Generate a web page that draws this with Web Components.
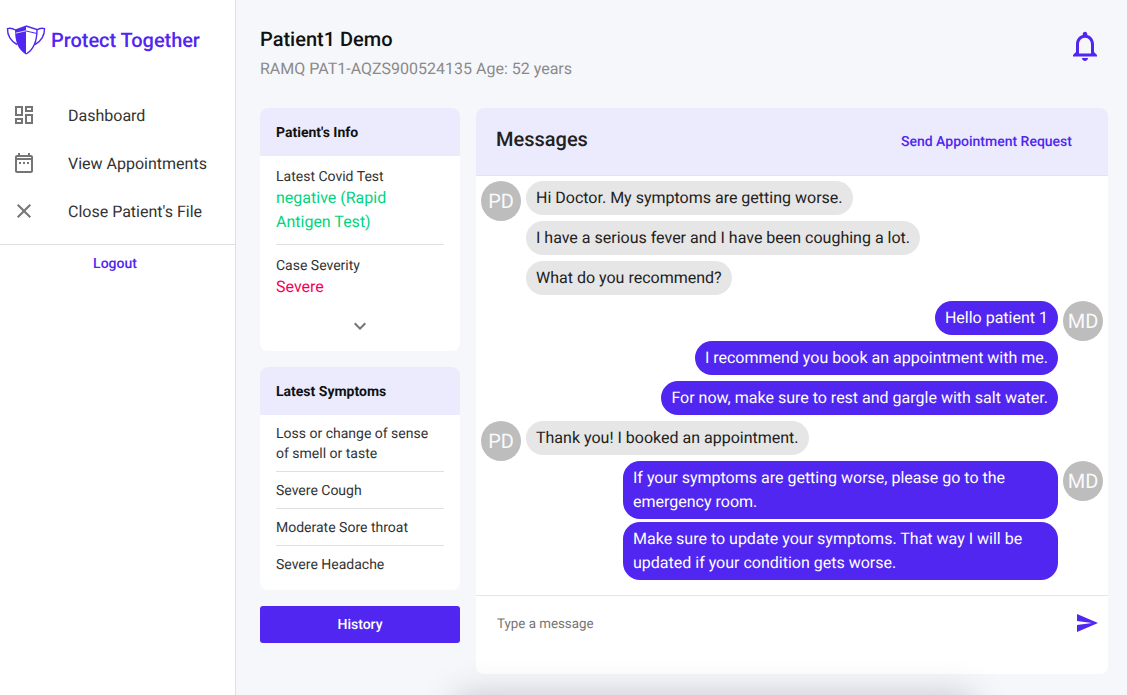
<!DOCTYPE html>
<html>
<head>
<meta charset="utf-8">
<title>Protect Together</title>
<style>
  html, body { margin: 0; height: 100%; overflow: hidden; }
  body { background: #f6f7fb; font-family: Roboto, "Liberation Sans", sans-serif; color: #212121; text-rendering: geometricPrecision; }
</style>
</head>
<body>
<app-shell>
  <side-nav slot="nav"></side-nav>
  <patient-header slot="header"></patient-header>
  <info-card slot="left" heading="Patient's Info" style="height:243px">
    <info-row label="Latest Covid Test" value="negative (Rapid Antigen Test)" tone="#00d47e"></info-row>
    <info-row label="Case Severity" value="Severe" tone="#f50057" last></info-row>
    <svg slot="footer" width="24" height="24" viewBox="0 0 24 24" fill="#757575"><path d="M7.41 8.59 12 13.17l4.59-4.58L18 10l-6 6-6-6z"/></svg>
  </info-card>
  <info-card slot="left" heading="Latest Symptoms" style="height:223px">
    <symptom-row>Loss or change of sense of smell or taste</symptom-row>
    <symptom-row>Severe Cough</symptom-row>
    <symptom-row>Moderate Sore throat</symptom-row>
    <symptom-row last>Severe Headache</symptom-row>
  </info-card>
  <history-button slot="left">History</history-button>
  <message-panel slot="right">
    <chat-line who="PD">Hi Doctor. My symptoms are getting worse.</chat-line>
    <chat-line>I have a serious fever and I have been coughing a lot.</chat-line>
    <chat-line>What do you recommend?</chat-line>
    <chat-line who="MD" mine>Hello patient 1</chat-line>
    <chat-line mine>I recommend you book an appointment with me.</chat-line>
    <chat-line mine>For now, make sure to rest and gargle with salt water.</chat-line>
    <chat-line who="PD">Thank you! I booked an appointment.</chat-line>
    <chat-line who="MD" mine tight>If your symptoms are getting worse, please go to the emergency room.</chat-line>
    <chat-line mine>Make sure to update your symptoms. That way I will be updated if your condition gets worse.</chat-line>
  </message-panel>
</app-shell>

<script>
class AppShell extends HTMLElement {
  constructor() {
    super();
    this.attachShadow({ mode: "open" }).innerHTML = `
    <style>
      :host { display: flex; height: 695px; position: relative; overflow: hidden; }
      .nav { width: 235px; flex-shrink: 0; background: #fff; border-right: 1px solid #e0e0e0; }
      .main { flex: 1; padding: 0 19px 0 24px; min-width: 0; }
      .columns { display: flex; gap: 16px; align-items: flex-start; }
      .left { width: 200px; flex-shrink: 0; display: flex; flex-direction: column; gap: 16px; }
      .right { flex: 1; min-width: 0; }
      .shade {
        position: absolute; left: 470px; width: 490px; top: 708px; height: 20px;
        box-shadow: 0 0 34px 12px rgba(60,64,80,.28);
      }
    </style>
    <div class="nav"><slot name="nav"></slot></div>
    <div class="main">
      <slot name="header"></slot>
      <div class="columns">
        <div class="left"><slot name="left"></slot></div>
        <div class="right"><slot name="right"></slot></div>
      </div>
    </div>
    <div class="shade"></div>`;
  }
}

class SideNav extends HTMLElement {
  constructor() {
    super();
    this.attachShadow({ mode: "open" }).innerHTML = `
    <style>
      :host { display: block; }
      .brand { display: flex; align-items: center; gap: 5px; height: 28px; padding: 26px 0 0 6px; }
      .brand span { font-size: 20px; font-weight: 500; color: #5026f0; white-space: nowrap; letter-spacing: -.05px; }
      ul { list-style: none; margin: 37px 0 0; padding: 0; border-bottom: 1px solid #e0e0e0; height: 153px; }
      li { display: flex; align-items: center; height: 48px; padding-left: 12px; font-size: 16px; color: #333; }
      li svg { width: 24px; height: 24px; fill: #757575; margin-right: 32px; flex-shrink: 0; }
      .logout { display: block; text-align: center; padding-right: 5px; margin-top: 11px; font-size: 14px; font-weight: 500; color: #5026f0; line-height: 16px; }
    </style>
    <div class="brand">
      <svg width="40" height="30" viewBox="0 0 40 30">
        <g fill="none" stroke="#5026f0">
          <path d="M9.500 5C6.500 3.200 3.500 3 1.500 3.700 1.200 10 5 16.500 11 19.500" stroke-width="1.400"/>
          <path d="M30.500 5C33.500 3.200 36.500 3 38.500 3.700 38.800 10 35 16.500 29 19.500" stroke-width="1.400"/>
          <path d="M20 1 31 4.500C31 15 29 24 20 29" stroke-width="1.400"/>
          <path d="M20 6 31 8.500" stroke-width="1"/>
        </g>
        <path d="M20 .5 9 4.500C9 15 11 24 20 29.500z" fill="#5026f0"/>
        <path d="M9.500 8.200 20 5.800" stroke="#fff" stroke-width=".8" fill="none"/>
      </svg>
      <span>Protect Together</span>
    </div>
    <ul>
      <li><svg viewBox="0 0 24 24"><path d="M19 5v2h-4V5h4M9 5v6H5V5h4m10 8v6h-4v-6h4M9 17v2H5v-2h4M21 3h-8v6h8V3zM11 3H3v10h8V3zm10 8h-8v10h8V11zm-10 4H3v6h8v-6z"/></svg>Dashboard</li>
      <li><svg viewBox="0 0 24 24"><path d="M19 4h-1V2h-2v2H8V2H6v2H5c-1.100 0-2 .9-2 2v14c0 1.100.9 2 2 2h14c1.100 0 2-.9 2-2V6c0-1.100-.9-2-2-2zm0 16H5V9h14v11zM5 7V6h14v1H5zm2 4h2v2H7zm4 0h2v2h-2zm4 0h2v2h-2z"/></svg>View Appointments</li>
      <li><svg viewBox="0 0 24 24"><path d="M19 6.410 17.590 5 12 10.590 6.410 5 5 6.410 10.590 12 5 17.590 6.410 19 12 13.410 17.590 19 19 17.590 13.410 12z"/></svg>Close Patient's File</li>
    </ul>
    <a class="logout">Logout</a>`;
  }
}

class PatientHeader extends HTMLElement {
  constructor() {
    super();
    this.attachShadow({ mode: "open" }).innerHTML = `
    <style>
      :host { display: flex; justify-content: space-between; height: 108px; }
      h1 { margin: 27px 0 0; font-size: 20px; line-height: 24px; font-weight: 500; color: #111; }
      p { margin: 8px 0 0; font-size: 16px; line-height: 20px; color: #8a8a8a; }
      svg { margin: 28px 5px 0 0; width: 36px; height: 36px; fill: #5026f0; }
    </style>
    <div>
      <h1>Patient1 Demo</h1>
      <p>RAMQ PAT1-AQZS900524135 Age: 52 years</p>
    </div>
    <svg viewBox="0 0 24 24"><path d="M12 22c1.100 0 2-.9 2-2h-4c0 1.100.9 2 2 2zm6-6v-5c0-3.070-1.630-5.640-4.500-6.320V4c0-.83-.67-1.500-1.500-1.500s-1.500.67-1.500 1.500v.68C7.640 5.360 6 7.920 6 11v5l-2 2v1h16v-1l-2-2zm-2 1H8v-6c0-2.480 1.510-4.500 4-4.500s4 2.020 4 4.500v6z"/></svg>`;
  }
}

class InfoCard extends HTMLElement {
  constructor() {
    super();
    this.attachShadow({ mode: "open" }).innerHTML = `
    <style>
      :host { display: flex; flex-direction: column; background: #fff; border-radius: 8px; overflow: hidden; }
      h2 { margin: 0; height: 47px; line-height: 48px; padding: 1px 16px 0; background: #ebebfd; font-size: 14px; font-weight: 700; color: #111; flex-shrink: 0; }
      .body { flex: 1; padding: 0 16px; }
      .foot { display: flex; justify-content: center; height: 37px; }
    </style>
    <h2></h2>
    <div class="body"><slot></slot></div>
    <div class="foot"><slot name="footer"></slot></div>`;
    this.shadowRoot.querySelector("h2").textContent = this.getAttribute("heading");
    if (!this.querySelector("[slot=footer]")) this.shadowRoot.querySelector(".foot").style.display = "none";
  }
}

class InfoRow extends HTMLElement {
  constructor() {
    super();
    this.attachShadow({ mode: "open" }).innerHTML = `
    <style>
      :host { display: block; padding: 10px 0 10px; border-bottom: 1px solid #e0e0e0; }
      :host([last]) { border-bottom: 0; }
      .l { font-size: 14px; line-height: 22px; margin-bottom: -2px; color: #333; }
      .v { font-size: 16px; line-height: 24px; }
      :host([last]) .v { line-height: 22px; padding-top: 1px; }
    </style>
    <div class="l"></div><div class="v"></div>`;
    this.shadowRoot.querySelector(".l").textContent = this.getAttribute("label");
    const v = this.shadowRoot.querySelector(".v");
    v.textContent = this.getAttribute("value");
    v.style.color = this.getAttribute("tone");
  }
}

class SymptomRow extends HTMLElement {
  constructor() {
    super();
    this.attachShadow({ mode: "open" }).innerHTML = `
    <style>
      :host { display: block; padding: 9px 0 7px; font-size: 14px; line-height: 20px; color: #333; border-bottom: 1px solid #e0e0e0; }
      :host([last]) { border-bottom: 0; }
    </style>
    <slot></slot>`;
  }
}

class HistoryButton extends HTMLElement {
  constructor() {
    super();
    this.attachShadow({ mode: "open" }).innerHTML = `
    <style>
      :host { display: block; height: 37px; line-height: 39px; text-align: center; background: #5026f0; color: #fff; border-radius: 3px; font-size: 14px; font-weight: 500; }
    </style>
    <slot></slot>`;
  }
}

class MessagePanel extends HTMLElement {
  constructor() {
    super();
    this.attachShadow({ mode: "open" }).innerHTML = `
    <style>
      :host { display: flex; flex-direction: column; height: 566px; background: #fff; border-radius: 8px; overflow: hidden; }
      header { display: flex; align-items: center; justify-content: space-between; box-sizing: border-box; height: 68px; padding: 0 36px 5px 20px; background: #ebebfd; border-bottom: 1px solid #e3e3ee; flex-shrink: 0; }
      h2 { margin: 0; font-size: 20px; font-weight: 500; color: #212121; }
      a { font-size: 14px; font-weight: 500; color: #5026f0; margin-top: 6px; }
      .list { padding: 5px 5px 0; display: flex; flex-direction: column; box-sizing: border-box; flex-shrink: 0; height: 419px; }
      footer { display: flex; align-items: flex-start; justify-content: space-between; border-top: 1px solid #e6e6e6; padding: 15px 9px 0 21px; flex: 1; }
      footer span { font-size: 13.330px; line-height: 27px; color: #757575; }
      footer svg { width: 24px; height: 24px; fill: #5026f0; }
    </style>
    <header><h2>Messages</h2><a>Send Appointment Request</a></header>
    <div class="list"><slot></slot></div>
    <footer>
      <span>Type a message</span>
      <svg viewBox="0 0 24 24"><path d="M2.010 21 23 12 2.010 3 2 10l15 2-15 2z"/></svg>
    </footer>`;
  }
}

class ChatLine extends HTMLElement {
  constructor() {
    super();
    const who = this.getAttribute("who");
    this.attachShadow({ mode: "open" }).innerHTML = `
    <style>
      :host { display: flex; gap: 5px; align-items: flex-start; }
      :host([mine]) { flex-direction: row-reverse; }
      .avatar { width: 40px; height: 40px; border-radius: 50%; background: #bdbdbd; color: #fafafa; font-size: 20px; line-height: 40px; text-align: center; flex-shrink: 0; }
      .gap { width: 40px; flex-shrink: 0; }
      .bubble { max-width: 415px; margin-bottom: 6px; padding: 5px 10px; font-size: 16px; line-height: 24px; background: #e6e6e6; color: #212121; border-radius: 17px; }
      :host([tight]) .bubble { margin-bottom: 3px; }
      :host([mine]) .bubble { background: #5026f0; color: #fff; }
    </style>
    ${who ? `<div class="avatar">${who}</div>` : `<div class="gap"></div>`}
    <div class="bubble"><slot></slot></div>`;
  }
}

customElements.define("app-shell", AppShell);
customElements.define("side-nav", SideNav);
customElements.define("patient-header", PatientHeader);
customElements.define("info-card", InfoCard);
customElements.define("info-row", InfoRow);
customElements.define("symptom-row", SymptomRow);
customElements.define("history-button", HistoryButton);
customElements.define("message-panel", MessagePanel);
customElements.define("chat-line", ChatLine);
</script>
</body>
</html>
